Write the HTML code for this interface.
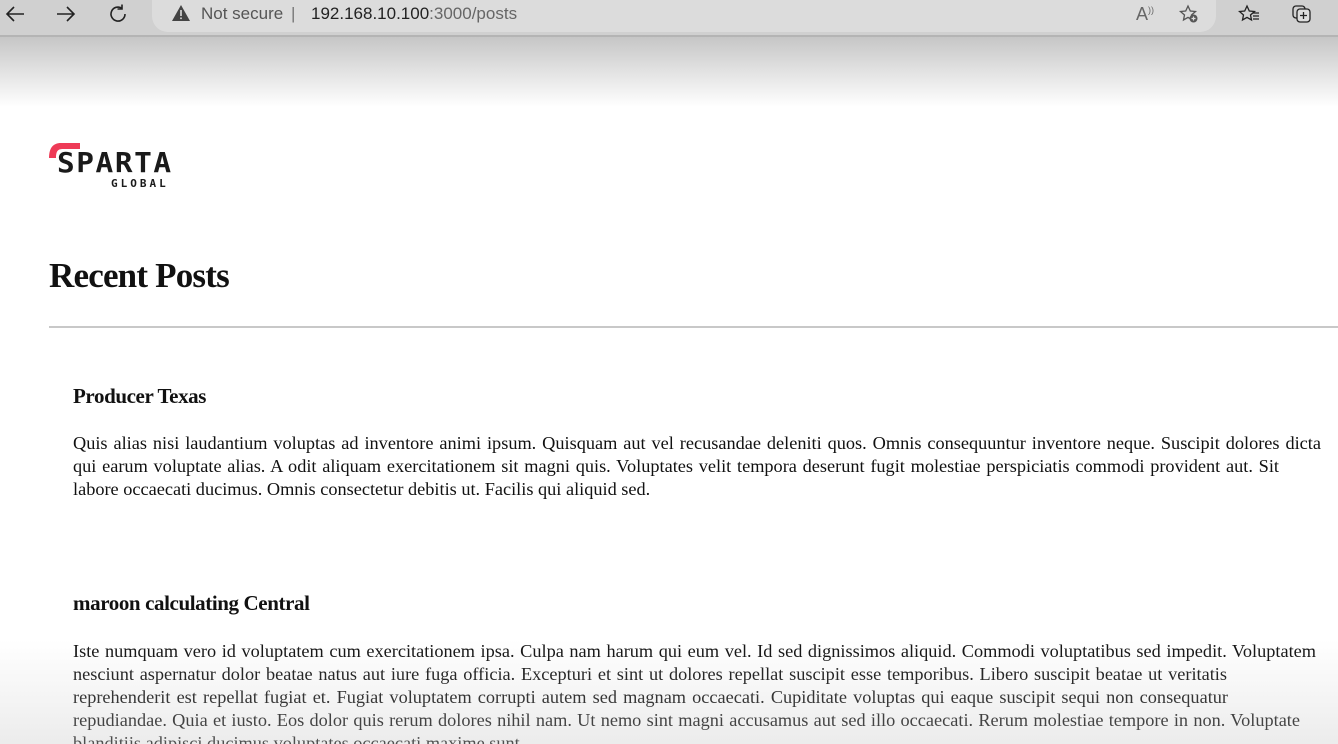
<!DOCTYPE html>
<html><head><meta charset="utf-8"><style>
*{margin:0;padding:0;box-sizing:border-box}
html,body{width:1338px;height:744px;overflow:hidden;background:#fff}
body{position:relative;font-family:"Liberation Serif","DejaVu Serif",serif;color:#111}
.bar{position:absolute;left:0;top:0;width:1338px;height:37px;background:#d0d0d0;border-bottom:2px solid #b4b4b4}
.pill{position:absolute;left:152px;top:0;width:1064px;height:32px;background:#dcdcdc;border-radius:0 0 16px 16px}
.fade{position:absolute;left:0;top:37px;width:1338px;height:70px;background:linear-gradient(#c6c6c6,#fff)}
.bfade{position:absolute;left:0;top:640px;width:1338px;height:104px;background:linear-gradient(rgba(200,200,200,0),rgba(200,200,200,.35));pointer-events:none}
.ui{position:absolute;font-family:"Liberation Sans",sans-serif;font-size:17px;top:4px}
h1{position:absolute;left:49px;top:256px;font-size:35px;font-weight:bold;letter-spacing:-0.8px}
.hr{position:absolute;left:49px;top:326px;width:1289px;height:2px;background:#c8c8c8}
h2{position:absolute;left:73px;font-size:21px;font-weight:bold;letter-spacing:-0.4px}
.ln{position:absolute;left:73px;font-size:18.3px;white-space:nowrap;text-align:justify;text-align-last:justify;height:23px;line-height:23px}
.ln.l{text-align-last:left}
</style></head><body>
<div class="bar"><div class="pill"></div></div>
<svg style="position:absolute;left:4px;top:4px" width="22" height="20" viewBox="0 0 22 20"><path d="M20 10H3M10 3L3 10L10 17" fill="none" stroke="#222" stroke-width="1.6"/></svg>
<svg style="position:absolute;left:55px;top:4px" width="22" height="20" viewBox="0 0 22 20"><path d="M2 10H19M12 3L19 10L12 17" fill="none" stroke="#222" stroke-width="1.6"/></svg>
<svg style="position:absolute;left:107px;top:3px" width="22" height="22" viewBox="0 0 22 22"><path d="M18 11A7 7 0 1 1 15 5.3M15 1.5V6H10.5" fill="none" stroke="#222" stroke-width="1.6"/></svg>
<svg style="position:absolute;left:171px;top:4px" width="20" height="18" viewBox="0 0 20 18"><path d="M10 1L19 17H1Z" fill="#444"/><rect x="9.2" y="6" width="1.6" height="6" fill="#ddd"/><rect x="9.2" y="13.5" width="1.6" height="1.6" fill="#ddd"/></svg>
<div class="ui" style="left:201px;color:#555">Not secure</div>
<div class="ui" style="left:291px;color:#777">|</div>
<div class="ui" style="left:311px;color:#222">192.168.10.100<span style="color:#666">:3000/posts</span></div>
<div class="ui" style="left:1136px;color:#666;font-size:18px">A<sup style="font-size:9px">))</sup></div>
<svg style="position:absolute;left:1178px;top:4px" width="22" height="20" viewBox="0 0 22 20"><path d="M10 2l2.3 5 5.2.5-4 3.5 1 5-4.5-2.6-4.5 2.6 1-5-4-3.5 5.2-.5z" fill="none" stroke="#555" stroke-width="1.3"/><circle cx="15.5" cy="14.5" r="4" fill="#555"/><path d="M15.5 12.5v4M13.5 14.5h4" stroke="#ddd" stroke-width="1.2"/></svg>
<svg style="position:absolute;left:1238px;top:4px" width="24" height="20" viewBox="0 0 24 20"><path d="M9 2l2.3 5 5.2.5-4 3.5 1 5-4.5-2.6-4.5 2.6 1-5-4-3.5 5.2-.5z" fill="none" stroke="#222" stroke-width="1.3"/><path d="M15 9h6M15 12h6M15 15h6" stroke="#222" stroke-width="1.3"/></svg>
<svg style="position:absolute;left:1291px;top:4px" width="22" height="20" viewBox="0 0 22 20"><rect x="2" y="2" width="12" height="12" rx="3" fill="none" stroke="#222" stroke-width="1.3"/><rect x="6" y="5" width="13" height="13" rx="3" fill="#ddd" stroke="#222" stroke-width="1.3"/><path d="M12.5 8v7M9 11.5h7" stroke="#222" stroke-width="1.3"/></svg>
<div class="fade"></div>
<svg style="position:absolute;left:48px;top:142px" width="124" height="48" viewBox="0 0 124 48"><path d="M1 16C1 6 5 1 13 1H32V7H15C10 7 8 9 8 16Z" fill="#ee3b57"/></svg>
<div style="position:absolute;left:57px;top:149px;font-family:'DejaVu Sans Mono','Liberation Mono',monospace;font-weight:bold;font-size:28px;letter-spacing:1.5px;color:#1a1a1a;line-height:28px;transform:scaleX(1.05);transform-origin:left">SPARTA</div>
<div style="position:absolute;left:111px;top:177px;font-family:'DejaVu Sans Mono',monospace;font-weight:bold;font-size:11px;letter-spacing:3px;color:#1a1a1a">GLOBAL</div>
<h1>Recent Posts</h1>
<div class="hr"></div>
<h2 style="top:384px">Producer Texas</h2>
<div class="ln" style="top:432px;width:1248px">Quis alias nisi laudantium voluptas ad inventore animi ipsum. Quisquam aut vel recusandae deleniti quos. Omnis consequuntur inventore neque. Suscipit dolores dicta</div>
<div class="ln" style="top:455px;width:1206px">qui earum voluptate alias. A odit aliquam exercitationem sit magni quis. Voluptates velit tempora deserunt fugit molestiae perspiciatis commodi provident aut. Sit</div>
<div class="ln l" style="top:478px;width:600px">labore occaecati ducimus. Omnis consectetur debitis ut. Facilis qui aliquid sed.</div>
<h2 style="top:591px">maroon calculating Central</h2>
<div class="ln" style="top:640px;width:1243px">Iste numquam vero id voluptatem cum exercitationem ipsa. Culpa nam harum qui eum vel. Id sed dignissimos aliquid. Commodi voluptatibus sed impedit. Voluptatem</div>
<div class="ln" style="top:663px;width:1154px">nesciunt aspernatur dolor beatae natus aut iure fuga officia. Excepturi et sint ut dolores repellat suscipit esse temporibus. Libero suscipit beatae ut veritatis</div>
<div class="ln" style="top:686px;width:1155px">reprehenderit est repellat fugiat et. Fugiat voluptatem corrupti autem sed magnam occaecati. Cupiditate voluptas qui eaque suscipit sequi non consequatur</div>
<div class="ln" style="top:709px;width:1227px">repudiandae. Quia et iusto. Eos dolor quis rerum dolores nihil nam. Ut nemo sint magni accusamus aut sed illo occaecati. Rerum molestiae tempore in non. Voluptate</div>
<div class="ln l" style="top:732px;width:600px">blanditiis adipisci ducimus voluptates occaecati maxime sunt.</div>
<div class="bfade"></div>
</body></html>
